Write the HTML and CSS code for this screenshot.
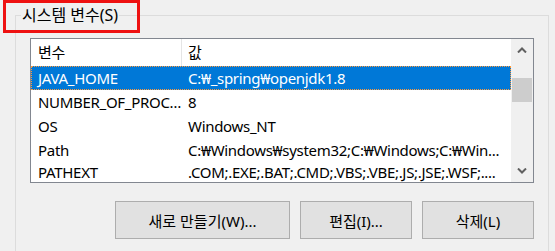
FILE: index.html
```html
<!DOCTYPE html>
<html lang="ko">
<head>
    <meta charset="UTF-8">
    <meta name="viewport" content="width=device-width, initial-scale=1.0">
    <title>시스템 변수</title>
    <link rel="stylesheet" href="styles.css">
</head>
<body>
    <div class="highlight"></div>

    <fieldset class="group">
        <legend>시스템 변수(S)</legend>

        <div class="list">
            <div class="list-body">
                <div class="row head">
                    <span class="col name">변수</span>
                    <span class="col value">값</span>
                </div>
                <div class="row selected">
                    <span class="col name">JAVA_HOME</span>
                    <span class="col value">C:₩_spring₩openjdk1.8</span>
                </div>
                <div class="row">
                    <span class="col name">NUMBER_OF_PROC…</span>
                    <span class="col value">8</span>
                </div>
                <div class="row">
                    <span class="col name">OS</span>
                    <span class="col value">Windows_NT</span>
                </div>
                <div class="row">
                    <span class="col name">Path</span>
                    <span class="col value">C:₩Windows₩system32;C:₩Windows;C:₩Win...</span>
                </div>
                <div class="row last">
                    <span class="col name">PATHEXT</span>
                    <span class="col value">.COM;.EXE;.BAT;.CMD;.VBS;.VBE;.JS;.JSE;.WSF;....</span>
                </div>
            </div>

            <div class="scrollbar">
                <div class="sb-btn">
                    <svg width="10" height="6" viewBox="0 0 10 6"><polyline points="1,5.5 5,1.5 9,5.5" fill="none" stroke="#606060" stroke-width="2"/></svg>
                </div>
                <div class="sb-track">
                    <div class="sb-thumb"></div>
                </div>
                <div class="sb-btn">
                    <svg width="10" height="6" viewBox="0 0 10 6"><polyline points="1,0.5 5,4.5 9,0.5" fill="none" stroke="#606060" stroke-width="2"/></svg>
                </div>
            </div>
        </div>

        <div class="actions">
            <button class="btn wide">새로 만들기(W)...</button>
            <button class="btn">편집(I)...</button>
            <button class="btn">삭제(L)</button>
        </div>
    </fieldset>
</body>
</html>
```

FILE: styles.css
```css
* {
    margin: 0;
    padding: 0;
    box-sizing: border-box;
}

body {
    font-family: 'Noto Sans', 'Noto Sans CJK KR', sans-serif;
    font-size: 15px;
    color: #000000;
    background-color: #f0f0f0;
    padding: 4px 0 0 15px;
    height: 251px;
    overflow: hidden;
}

/* red annotation box drawn over the group title */
.highlight {
    position: absolute;
    top: 0;
    left: 3px;
    width: 137px;
    height: 33px;
    border: 3px solid #ee1111;
}

.group {
    width: 534px;
    height: 247px;
    border: 1px solid #dcdcdc;
    border-bottom: none;
    padding: 12px 14px 0 5px;
}

.group legend {
    padding: 0 1px;
    font-size: 16px;
    line-height: 22px;
}

.list {
    display: flex;
    margin-left: 9px;
    width: 504px;
    height: 145px;
    border: 1px solid #828790;
    background-color: #ffffff;
    letter-spacing: -0.3px;
}

.list-body {
    width: 480px;
    overflow: hidden;
}

.row {
    display: flex;
    height: 24px;
    line-height: 24px;
    white-space: nowrap;
}

.row.head {
    height: 27px;
    line-height: 27px;
}

/* last row is only partly visible above the list border */
.row.last {
    height: 20px;
    line-height: 18px;
    padding-top: 1px;
}

.col {
    overflow: hidden;
}

.col.name {
    width: 151px;
    padding-left: 7px;
}

.col.value {
    flex: 1;
    padding-left: 6px;
}

.row.head .col.name {
    border-right: 1px solid #e5e5e5;
}

.row.selected {
    background-color: #0078d7;
    color: #ffffff;
    border: 1px dotted #ff9a3c;
    line-height: 22px;
}

.row.selected .col.name {
    width: 150px;
    padding-left: 6px;
}

.scrollbar {
    width: 22px;
    display: flex;
    flex-direction: column;
    background-color: #f0f0f0;
}

.sb-btn {
    height: 22px;
    display: flex;
    align-items: center;
    justify-content: center;
}

.sb-track {
    flex: 1;
    padding: 17px 1px 0;
}

.sb-thumb {
    height: 24px;
    background-color: #cdcdcd;
}

.actions {
    display: flex;
    justify-content: flex-end;
    gap: 10px;
    margin-top: 18px;
}

.btn {
    width: 112px;
    height: 38px;
    font-family: inherit;
    font-size: 15px;
    color: #000000;
    background-color: #e1e1e1;
    border: 1px solid #adadad;
}

.btn.wide {
    width: 175px;
}
```
